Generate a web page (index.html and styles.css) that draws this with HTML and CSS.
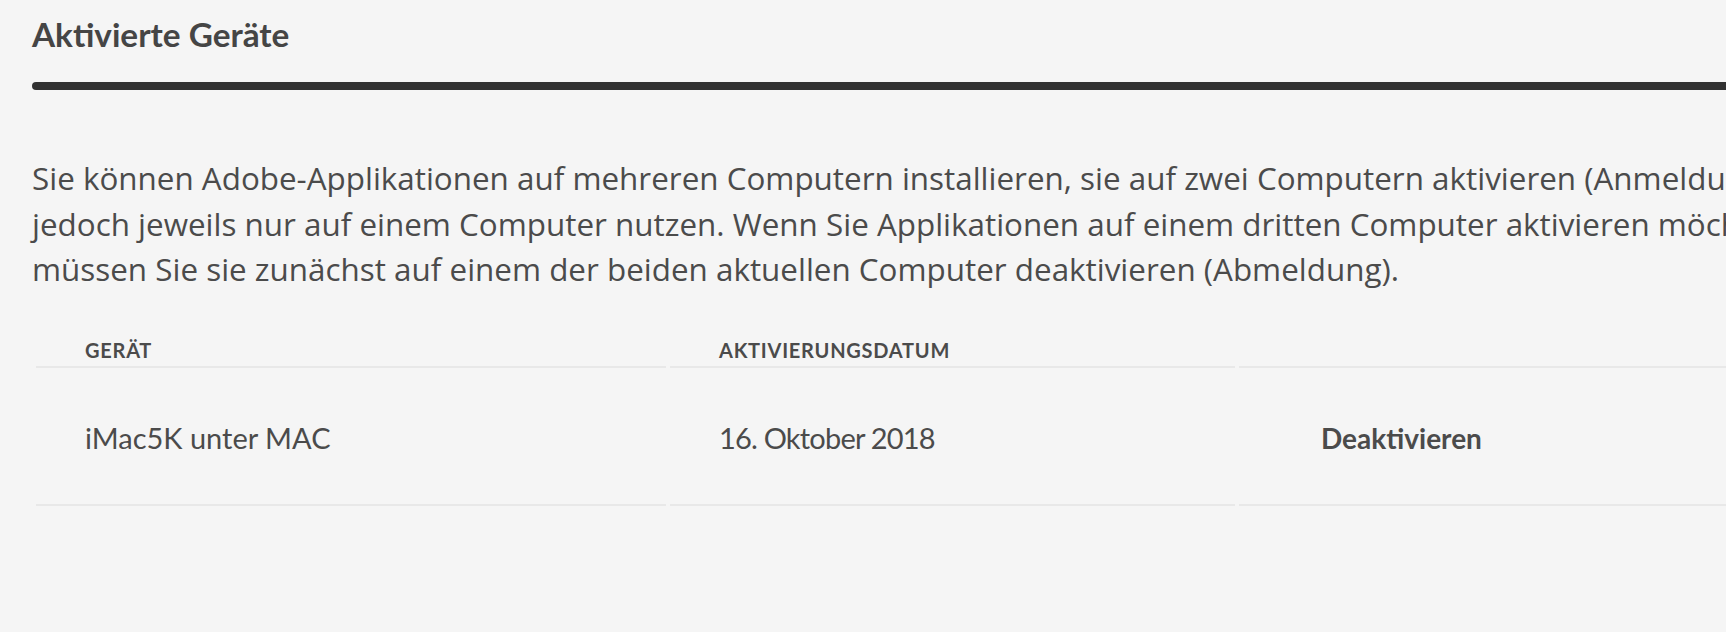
FILE: index.html
```html
<!DOCTYPE html>
<html lang="de">
<head>
<meta charset="utf-8">
<title>Aktivierte Geräte</title>
<link rel="stylesheet" href="styles.css">
</head>
<body>
<main class="page">
  <section class="devices">
    <h2 class="devices-title">Aktivierte Geräte</h2>
    <div class="devices-rule"></div>
    <p class="devices-text">Sie können Adobe-Applikationen auf mehreren Computern installieren, sie auf zwei Computern aktivieren (Anmeldung),<br>jedoch jeweils nur auf einem Computer nutzen. Wenn Sie Applikationen auf einem dritten Computer aktivieren möchten,<br>müssen Sie sie zunächst auf einem der beiden aktuellen Computer deaktivieren (Abmeldung).</p>
    <table class="devices-table">
      <colgroup>
        <col class="col-device">
        <col class="col-date">
        <col class="col-action">
      </colgroup>
      <thead>
        <tr>
          <th class="th">Gerät</th>
          <th class="th">Aktivierungsdatum</th>
          <th class="th"></th>
        </tr>
      </thead>
      <tbody>
        <tr>
          <td class="td">iMac5K unter MAC</td>
          <td class="td td-date">16. Oktober 2018</td>
          <td class="td td-action"><a class="deactivate" href="#">Deaktivieren</a></td>
        </tr>
      </tbody>
    </table>
  </section>
</main>
</body>
</html>
```

FILE: styles.css
```css
html, body {
  margin: 0;
  padding: 0;
  background: #f5f5f5;
  overflow: hidden;
}

body {
  font-family: Lato, "Open Sans", sans-serif;
  color: #4b4b4b;
}

.page {
  width: 1900px;
  padding: 14px 0 0 32px;
}

.devices-title {
  margin: 0;
  font-size: 33.3px;
  line-height: 40px;
  font-weight: 700;
  color: #454545;
}

.devices-rule {
  margin-top: 28px;
  height: 8px;
  border-radius: 4px;
  background: #323232;
}

.devices-text {
  margin: 65px 0 0;
  font-family: "Open Sans", Lato, sans-serif;
  font-size: 31.4px;
  line-height: 45.5px;
  white-space: nowrap;
}

.devices-table {
  margin-top: 40px;
  border-collapse: separate;
  border-spacing: 4px 0;
  table-layout: fixed;
  width: 1860px;
}

.col-device { width: 630px; }
.col-date { width: 565px; }

.th {
  text-align: left;
  font-size: 20px;
  line-height: 24px;
  font-weight: 700;
  letter-spacing: 0.75px;
  text-transform: uppercase;
  padding: 6px 0 4px 49px;
  border-bottom: 2px solid #e8e8e8;
}

.td {
  font-size: 29px;
  line-height: 36px;
  padding: 52px 0 48px 49px;
  border-bottom: 2px solid #e8e8e8;
}

.td-date {
  letter-spacing: -0.8px;
}

.td-action {
  padding-left: 82px;
}

.deactivate {
  font-size: 28px;
  font-weight: 700;
  color: #4b4b4b;
  text-decoration: none;
}
```
